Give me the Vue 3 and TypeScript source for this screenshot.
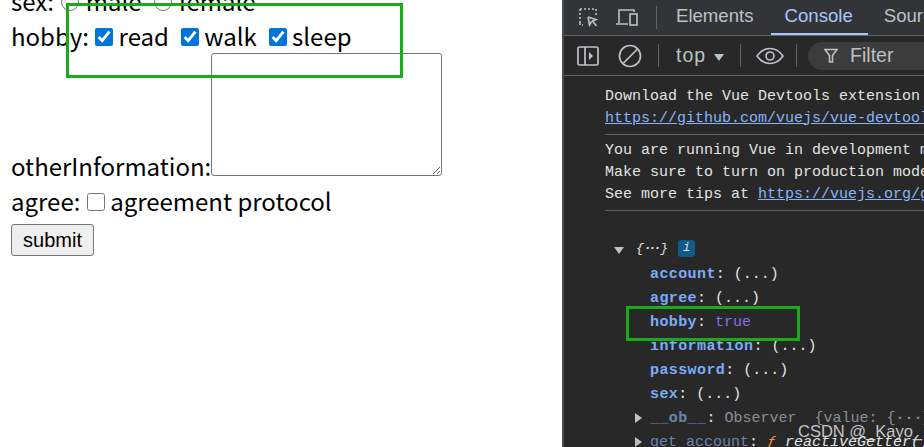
<script setup lang="ts">
interface Prop { name: string; value: string; cls?: string }
const props: Prop[] = [
  { name: 'account', value: '(...)' },
  { name: 'agree', value: '(...)' },
  { name: 'hobby', value: 'true', cls: 'bool' },
  { name: 'information', value: '(...)' },
  { name: 'password', value: '(...)' },
  { name: 'sex', value: '(...)' },
]
</script>

<template>
  <div class="page">
    <form class="form" @submit.prevent>
      <div class="row sex">sex: <label class="opt"><input type="radio" name="sex" /> male</label> <label class="opt"><input type="radio" name="sex" /> female</label></div>
      <div class="row">hobby: <label class="opt"><input type="checkbox" checked /> read</label> <label class="opt"><input type="checkbox" checked /> walk</label> <label class="opt"><input type="checkbox" checked /> sleep</label></div>
      <div class="row info">otherInformation:<textarea></textarea></div>
      <div class="row">agree: <label class="opt"><input type="checkbox" /> agreement protocol</label></div>
      <button class="submit" type="button">submit</button>
    </form>

    <aside class="devtools">
      <div class="tabs">
        <svg class="ic" width="22" height="22" viewBox="0 0 22 22" fill="none" stroke="#bdc1c6" stroke-width="1.6">
          <path d="M2 2h16M2 2v14M2 16v2h3M18 2v6" stroke-dasharray="2 2" />
          <path d="M10 10l8 2.500-3.500 1.500 4 5M10 10l1.500 8 2-3.500" />
        </svg>
        <svg class="ic device" width="24" height="20" viewBox="0 0 24 20" fill="none" stroke="#bdc1c6" stroke-width="1.6">
          <path d="M3 15V2h15v2M0 16h12" />
          <rect x="14" y="6" width="7" height="11" />
        </svg>
        <span class="vsep first-sep"></span>
        <span class="tab elements">Elements</span>
        <span class="tab active">Console</span>
        <span class="tab">Sources</span>
      </div>
      <div class="toolbar">
        <svg class="ic" width="22" height="22" viewBox="0 0 22 22" fill="none" stroke="#bdc1c6" stroke-width="1.7">
          <rect x="1" y="2" width="20" height="18" rx="1.500" />
          <path d="M8 2v18" />
          <path d="M12 7l4 4-4 4z" fill="#bdc1c6" stroke="none" />
        </svg>
        <svg class="ic block" width="24" height="24" viewBox="0 0 24 24" fill="none" stroke="#bdc1c6" stroke-width="1.7">
          <circle cx="12" cy="12" r="10.500" />
          <path d="M5 19.500L19.500 5" />
        </svg>
        <span class="vsep sep-a"></span>
        <span class="top">top</span>
        <span class="caret"></span>
        <span class="vsep sep-b"></span>
        <svg class="ic eye" width="28" height="18" viewBox="0 0 28 18" fill="none" stroke="#bdc1c6" stroke-width="1.7">
          <path d="M1 9c3.500-5 8-7.500 13-7.500S23.500 4 27 9c-3.500 5-8 7.500-13 7.500S4.500 14 1 9z" />
          <circle cx="14" cy="9" r="4" />
        </svg>
        <span class="vsep sep-c"></span>
        <div class="filter">
          <svg width="14" height="15" viewBox="0 0 14 15" fill="none" stroke="#bdc1c6" stroke-width="1.6">
            <path d="M1 1.500h12L8.500 7.500V14h-3V7.500z" />
          </svg>
          <span>Filter</span>
        </div>
      </div>
      <div class="console">
        <div class="msg msg-a">
          <div>Download the Vue Devtools extension for a better development experience:</div>
          <div><span class="link">https://github.com/vuejs/vue-devtools</span></div>
        </div>
        <div class="msg msg-b">
          <div>You are running Vue in development mode.</div>
          <div>Make sure to turn on production mode when deploying for production.</div>
          <div>See more tips at <span class="link">https://vuejs.org/guide/deployment.html</span></div>
        </div>
        <div class="obj">
          <div class="head">
            <span class="down"></span>
            <em class="brace">{<b>···</b>}</em>
            <span class="badge">i</span>
          </div>
          <div v-for="p in props" :key="p.name" class="prop">
            <b class="key">{{ p.name }}</b><span class="colon">:</span> <span :class="p.cls">{{ p.value }}</span>
          </div>
          <div class="prop">
            <span class="right"></span><b class="dim wide">__ob__</b><span class="colon">:</span> <span class="dimv">Observer&nbsp; {value: {<b>···</b>},</span>
          </div>
          <div class="prop">
            <span class="right"></span><span class="dim">get account</span><span class="colon">:</span> <em class="fn"><i>ƒ</i> reactiveGetter()</em>
          </div>
        </div>
      </div>
    </aside>

    <div class="mark left"></div>
    <div class="mark right"></div>
    <div class="watermark">CSDN @_Kayo_</div>
  </div>
</template>

<style>
html, body { margin: 0; background: #fff; overflow: hidden; }
</style>

<style scoped>
.page {
  position: relative;
  display: flex;
  width: 924px;
  height: 447px;
  overflow: hidden;
}
.form {
  width: 562px;
  flex: none;
  box-sizing: border-box;
  padding: 0 0 0 11px;
  margin-top: -17px;
  font: 24px/35px "Noto Sans CJK SC", "Noto Sans", sans-serif;
  color: #000;
}
.row { line-height: 35px; white-space: nowrap; }
.opt { margin-right: 5.500px; }
.row input[type="checkbox"],
.row input[type="radio"] {
  width: 18px;
  height: 18px;
  margin: 3px 0 2px 1px;
  accent-color: #0075d9;
}
.row input[type="radio"] { margin-left: 2px; margin-right: 1px; }
.row textarea {
  width: 231px;
  height: 123px;
  box-sizing: border-box;
  border: 1px solid #767676;
  border-radius: 3px;
  padding: 2px;
  background: #fff;
}
.submit {
  display: block;
  width: 83px;
  height: 32px;
  margin-top: 6px;
  padding: 0;
  font: 20px "Liberation Sans", Arial, sans-serif;
  color: #000;
  background: #efefef;
  border: 1px solid #767676;
  border-radius: 3px;
}
.devtools {
  flex: 1;
  min-width: 0;
  background: #282828;
  border-left: 2px solid #4a4c50;
  box-sizing: border-box;
  display: flex;
  flex-direction: column;
  color: #e3e3e3;
  overflow: hidden;
}
.tabs {
  height: 36px;
  flex: none;
  display: flex;
  align-items: center;
  box-sizing: border-box;
  padding-left: 14px;
  background: #333437;
  border-bottom: 1px solid #5f6368;
  font: 18.600px "Liberation Sans", Arial, sans-serif;
  color: #bdc1c6;
  white-space: nowrap;
}
.ic { flex: none; }
.device { margin-left: 16px; }
.vsep { flex: none; width: 1px; height: 23px; background: #5f6368; }
.first-sep { margin: 0 9px 0 16px; }
.tab { padding: 0 10px; height: 35px; line-height: 31px; box-sizing: border-box; margin-right: 6px; }
.tab.elements { margin-right: 7px; }
.tab.active { color: #a8c7fa; border-bottom: 2px solid #a8c7fa; padding: 0 15px 0 14px; }
.toolbar {
  height: 40px;
  flex: none;
  display: flex;
  align-items: center;
  box-sizing: border-box;
  padding-left: 13px;
  background: #282828;
  border-bottom: 1px solid #5f6368;
  font: 19.500px "Liberation Sans", Arial, sans-serif;
  color: #bdc1c6;
  white-space: nowrap;
}
.block { margin-left: 19px; }
.sep-a { margin: 0 17px 0 16px; }
.sep-b { margin: 0 15px 0 16px; }
.sep-c { margin: 0 11px 0 12px; }
.top { letter-spacing: 1px; }
.caret {
  width: 0; height: 0;
  margin-left: 8px;
  border-left: 5.500px solid transparent;
  border-right: 5.500px solid transparent;
  border-top: 7px solid #bdc1c6;
  margin-top: 3px;
}
.filter {
  display: flex;
  align-items: center;
  gap: 12px;
  width: 130px;
  height: 28px;
  flex: none;
  padding-left: 16px;
  border-radius: 14px;
  background: #3c3c3c;
}
.console {
  flex: 1;
  font: 15px/21.700px "Liberation Mono", monospace;
  color: #e3e3e3;
  white-space: nowrap;
  padding-left: 41px;
}
.link { color: #8ab4f8; text-decoration: underline; }
.msg { border-bottom: 1px solid #5f6368; }
.msg-a { padding-top: 10px; padding-bottom: 5px; }
.msg-b { padding-top: 5px; padding-bottom: 4px; }
.obj { margin-left: -41px; padding-top: 26px; line-height: 24px; }
.head { height: 24px; padding-left: 50px; display: flex; align-items: center; margin-bottom: 2px; }
.down {
  width: 0; height: 0;
  border-left: 5.500px solid transparent;
  border-right: 5.500px solid transparent;
  border-top: 7px solid #bdc1c6;
  margin-top: 3px;
}
.brace { margin-left: 12px; color: #e3e3e3; font-size: 13px; }
.brace b { letter-spacing: -3px; padding-right: 2px; }
.badge {
  width: 17px; height: 17px;
  margin-left: 10px;
  border-radius: 3px;
  background: #0e5a8a;
  color: #e3e3e3;
  font: italic 12px/17px "Liberation Mono", monospace;
  text-align: center;
}
.prop { height: 24px; padding-left: 86px; position: relative; }
.key { color: #7cacf8; letter-spacing: .4px; }
.colon { color: #e3e3e3; }
.bool { color: #8c6cf0; }
.dim { color: #6b84ad; }
.dim.wide { letter-spacing: .4px; }
.dimv { color: #8b8f94; }
.right {
  position: absolute;
  left: 71px; top: 6px;
  width: 0; height: 0;
  border-top: 5.500px solid transparent;
  border-bottom: 5.500px solid transparent;
  border-left: 7px solid #bdc1c6;
}
.fn { color: #e3e3e3; }
.fn i { color: #f28b54; }
.mark {
  position: absolute;
  box-sizing: border-box;
  border: 3px solid #1aab1a;
  pointer-events: none;
}
.mark.left { left: 66px; top: 3px; width: 337px; height: 75px; }
.mark.right { left: 626px; top: 306px; width: 174px; height: 35px; }
.watermark {
  position: absolute;
  left: 798px; top: 421px;
  font: 16.500px/20px "Liberation Sans", Arial, sans-serif;
  color: rgba(225, 225, 225, .85);
  white-space: nowrap;
}
</style>
